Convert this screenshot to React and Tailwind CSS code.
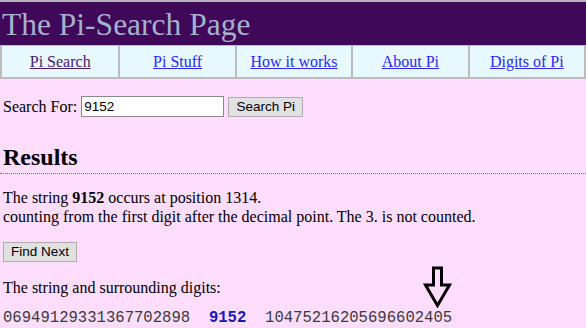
export default function App() {
  const links = ['Pi Search', 'Pi Stuff', 'How it works', 'About Pi', 'Digits of Pi'];

  return (
    <div className="w-[586px] h-[328px] overflow-hidden bg-[#ffddff] font-['Liberation_Serif',serif] text-[16px] text-black">
      <div className="h-[2px] bg-[#b8b0c0]" />
      <div className="h-[43px] bg-[#400858] pl-[2px] flex items-center">
        <h1 className="text-[31.5px] leading-none text-[#a4b2cc] mt-[2px]">The Pi-Search Page</h1>
      </div>
      <div className="grid grid-cols-5 h-[34px] bg-[#e8f8ff] border-x-2 border-b-2 border-t border-[#bcbcbc]">
        {links.map((l, i) => (
          <div
            key={l}
            className={`flex items-center justify-center ${i > 0 ? 'border-l-2 border-[#bcbcbc]' : ''}`}
          >
            <a
              href="#"
              className={`underline ${i === 0 ? 'text-[#4a1a6b]' : 'text-[#2a2af0]'}`}
            >
              {l}
            </a>
          </div>
        ))}
      </div>

      <div className="px-[3px]">
        <div className="flex items-center mt-[17px] h-[21px]">
          <span>Search For:</span>
          <input
            readOnly
            value="9152"
            className="ml-[4px] w-[143px] h-[21px] border border-[#8a8a8a] bg-white px-[2px] font-['Liberation_Sans',sans-serif] text-[13.5px] outline-none"
          />
          <button className="ml-[4px] h-[20px] w-[75px] bg-[#e1e1e1] border border-[#adadad] font-['Liberation_Sans',sans-serif] text-[13.5px] leading-none">
            Search Pi
          </button>
        </div>

        <h2 className="mt-[28px] text-[24px] font-bold leading-none">Results</h2>
      </div>
      <div className="mt-[4px] border-t border-dotted border-[#ff3030]" />

      <div className="px-[3px]">
        <p className="mt-[15px] leading-[18.5px]">
          The string <b>9152</b> occurs at position 1314.
          <br />
          counting from the first digit after the decimal point. The 3. is not counted.
        </p>

        <button className="mt-[16px] h-[20px] w-[74px] bg-[#e1e1e1] border border-[#adadad] font-['Liberation_Sans',sans-serif] text-[13.5px] leading-none">
          Find Next
        </button>

        <p className="mt-[16px] leading-[18px]">The string and surrounding digits:</p>

        <div className="relative mt-[12px] font-['Liberation_Mono',monospace] text-[15.6px] leading-[18px] text-[#3a3a3a] whitespace-pre">
          {'06949129331367702898  '}
          <b className="text-[#1818b0]">9152</b>
          {'  10475216205696602405'}
          <svg
            className="absolute left-[420px] top-[-43px]"
            width="30"
            height="42"
            viewBox="0 0 30 42"
          >
            <path
              d="M10.5 2 H18.5 V19 H26.5 L14.5 39.5 L2.5 19 H10.5 Z"
              fill="none"
              stroke="#000"
              strokeWidth="3"
              strokeLinejoin="miter"
            />
          </svg>
        </div>
      </div>
    </div>
  );
}
